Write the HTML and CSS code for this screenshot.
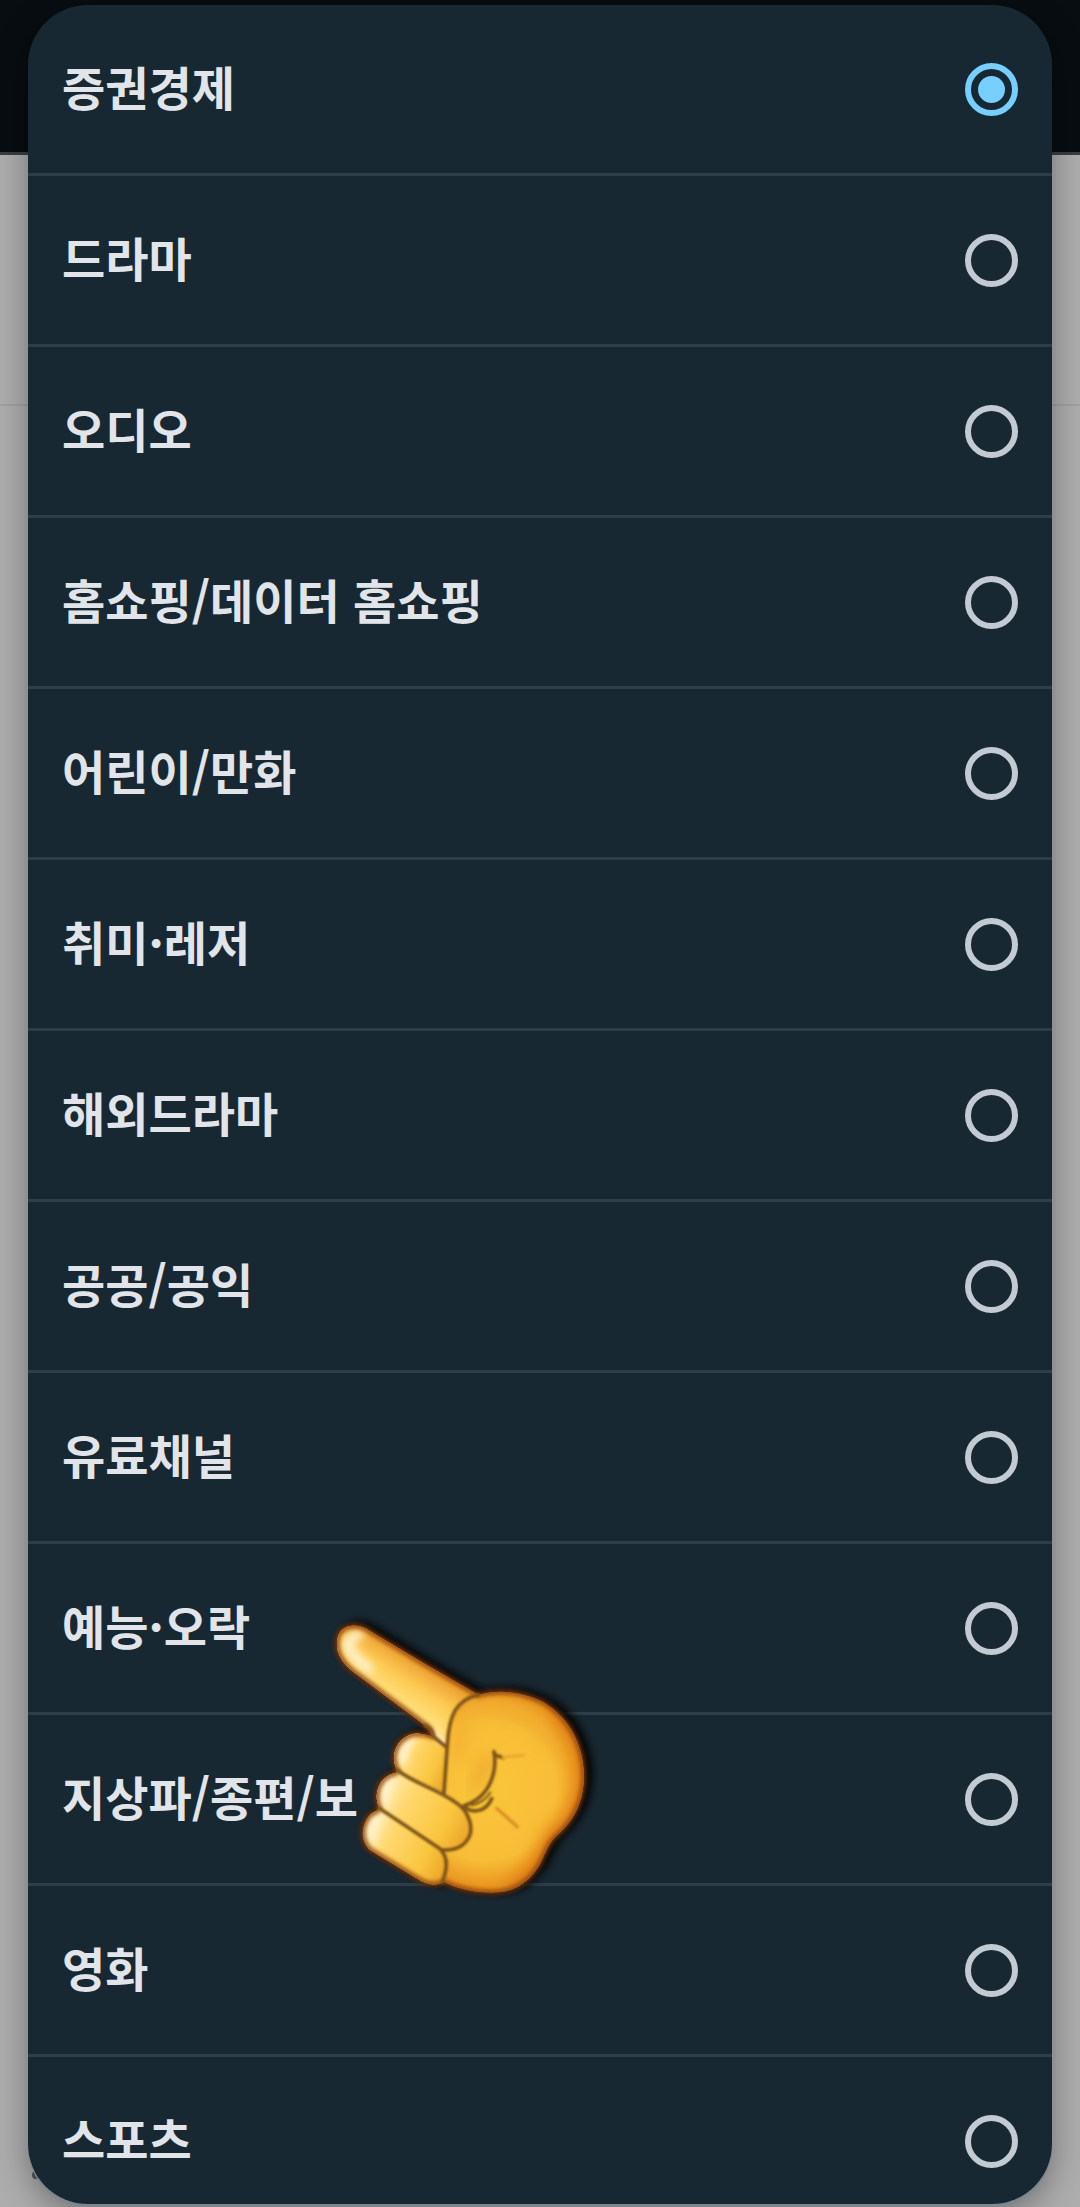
FILE: index.html
```
<!DOCTYPE html>
<html lang="ko">
<head>
<meta charset="utf-8">
<meta name="viewport" content="width=device-width, initial-scale=1">
<title>채널 장르</title>
<link rel="stylesheet" href="styles.css">
</head>
<body>
<div class="page">
  <header class="page-header"></header>
  <section class="page-top"></section>
  <section class="page-body"><span class="bullet"></span></section>
</div>
<form class="dialog">
  <label class="option"><span>증권경제</span><input type="radio" name="genre" checked></label>
  <label class="option"><span>드라마</span><input type="radio" name="genre"></label>
  <label class="option"><span>오디오</span><input type="radio" name="genre"></label>
  <label class="option"><span>홈쇼핑/데이터 홈쇼핑</span><input type="radio" name="genre"></label>
  <label class="option"><span>어린이/만화</span><input type="radio" name="genre"></label>
  <label class="option"><span>취미·레저</span><input type="radio" name="genre"></label>
  <label class="option"><span>해외드라마</span><input type="radio" name="genre"></label>
  <label class="option"><span>공공/공익</span><input type="radio" name="genre"></label>
  <label class="option"><span>유료채널</span><input type="radio" name="genre"></label>
  <label class="option pointed"><span>예능·오락</span><input type="radio" name="genre">
    <svg class="hand" viewBox="0 0 900 960" aria-hidden="true">
      <defs>
        <filter id="shade" x="-20%" y="-20%" width="140%" height="140%"><feGaussianBlur stdDeviation="14"/></filter>
        <filter id="rim" x="-20%" y="-20%" width="140%" height="140%"><feGaussianBlur stdDeviation="7"/></filter>
        <filter id="glow" x="-50%" y="-50%" width="200%" height="200%"><feGaussianBlur stdDeviation="13"/></filter>
        <filter id="soft" x="-50%" y="-50%" width="200%" height="200%"><feGaussianBlur stdDeviation="24"/></filter>
        <filter id="line" x="-20%" y="-20%" width="140%" height="140%"><feGaussianBlur stdDeviation="3"/></filter>
        <path id="outline" d="M84 108 C96 74 142 66 178 92 L350 195 L505 284 C570 266 640 276 700 306 C774 350 820 430 822 525 C822 600 796 654 748 700 C716 726 708 756 690 792 C655 850 610 878 545 878 C490 878 440 866 400 846 C382 858 355 854 335 844 L180 750 C150 720 152 678 178 645 C196 632 205 634 207 624 C190 585 205 540 240 524 C252 518 262 520 262 512 C238 470 258 420 300 404 C322 396 345 402 366 408 C366 392 358 382 340 372 L130 215 C92 185 72 150 84 108 Z"/>
        <clipPath id="inside"><use href="#outline"/></clipPath>
        <linearGradient id="finger" gradientUnits="userSpaceOnUse" x1="245" y1="290" x2="325" y2="165">
          <stop offset="0" stop-color="#ffe07a"/><stop offset=".45" stop-color="#fdc952"/><stop offset="1" stop-color="#e89224"/>
        </linearGradient>
        <radialGradient id="palm" gradientUnits="userSpaceOnUse" cx="530" cy="570" r="340">
          <stop offset="0" stop-color="#f9c63b"/><stop offset=".62" stop-color="#f8bd36"/><stop offset="1" stop-color="#df7d13"/>
        </radialGradient>
        <linearGradient id="knuckle" gradientUnits="objectBoundingBox" x1="0" y1=".25" x2="1" y2=".7">
          <stop offset="0" stop-color="#fff0c0"/><stop offset=".32" stop-color="#ffd76d"/><stop offset=".75" stop-color="#fac63f"/><stop offset="1" stop-color="#eda82c"/>
        </linearGradient>
      </defs>
      <use href="#outline" fill="#000" stroke="#000" stroke-width="16" transform="translate(18 -5)" filter="url(#shade)"/>
      <use href="#outline" fill="#6a3108" stroke="#6a3108" stroke-width="14" filter="url(#rim)"/>
      <g clip-path="url(#inside)">
        <use href="#outline" fill="url(#palm)"/>
        <path d="M70 60 L180 88 L505 284 Q420 310 412 440 L340 385 L60 190Z" fill="url(#finger)"/>
        <path d="M450 480 C430 370 460 330 530 325 C620 320 680 350 720 430" fill="none" stroke="#f3b033" stroke-width="36" filter="url(#soft)"/>
        <path d="M750 330 C885 450 845 640 735 710 C705 780 670 840 600 885" fill="none" stroke="#df7d16" stroke-width="62" filter="url(#soft)"/>
        <path d="M540 465 L492 570" stroke="#eda22c" stroke-width="30" filter="url(#soft)"/>
        <path d="M262 512 C230 465 260 400 320 396 L412 442 L405 580Z" fill="url(#knuckle)"/>
        <path d="M207 624 C180 570 215 515 264 514 L405 580 L450 612 C487 645 495 690 465 730 C440 752 420 752 395 750Z" fill="url(#knuckle)"/>
        <path d="M180 750 C145 720 155 650 207 624 L395 750 C418 778 414 815 395 860 L340 860Z" fill="url(#knuckle)"/>
        <path d="M112 138 Q118 112 145 104 M115 140 Q130 172 175 205 M278 480 Q270 445 300 424 M225 600 Q217 565 240 547 M182 715 Q180 675 204 658" fill="none" stroke="#fff2cc" stroke-width="32" stroke-linecap="round" filter="url(#glow)"/>
        <path d="M370 385 Q378 415 405 430" fill="none" stroke="#ffe5bb" stroke-width="20" filter="url(#rim)"/>
        <use href="#outline" fill="none" stroke="#94480e" stroke-width="16" filter="url(#rim)"/>
      </g>
      <g fill="none" stroke="#7f5516" stroke-width="11" stroke-linecap="round" stroke-linejoin="round" filter="url(#line)">
        <path d="M505 284 C438 300 417 345 412 435 L402 578"/>
        <path d="M345 376 Q370 390 368 408 L407 440"/>
        <path d="M262 510 C310 550 380 565 435 606 C478 632 495 688 472 720 C450 750 422 750 398 750"/>
        <path d="M207 624 L390 746 C418 775 410 810 397 846"/>
        <path d="M552 455 C560 500 550 590 462 617 C482 642 527 638 545 596"/>
        <path d="M555 465 L580 473"/>
        <path d="M485 616 Q520 609 541 578" stroke-width="6"/>
        <path d="M560 625 L622 680" stroke="#dc8f28" stroke-width="10"/>
        <path d="M580 472 L640 466" stroke="#e9aa30" stroke-width="9"/>
      </g>
    </svg>
  </label>
  <label class="option"><span>지상파/종편/보</span><input type="radio" name="genre"></label>
  <label class="option"><span>영화</span><input type="radio" name="genre"></label>
  <label class="option"><span>스포츠</span><input type="radio" name="genre"></label>
</form>
</body>
</html>
```
FILE: styles.css
```
* {
  box-sizing: border-box;
}

body {
  margin: 0;
  height: 100vh;
  overflow: hidden;
  background: #adadad;
  font-family: "Noto Sans CJK KR", "Noto Sans", sans-serif;
}

.page {
  display: flex;
  flex-direction: column;
  height: 100%;
}

.page-header {
  flex: none;
  height: 155px;
  background: #070d10;
  border-bottom: 3px solid #393e41;
}

.page-top {
  flex: none;
  height: 251px;
  border-bottom: 2px solid #a0a0a0;
}

.page-body {
  flex: 1;
  display: flex;
  align-items: flex-end;
  padding: 0 32px 28px;
}

.bullet {
  width: 8px;
  height: 8px;
  border-radius: 50%;
  background: #555;
}

/* The genre picker lies over the dimmed page and scrolls on its own. */
.dialog {
  position: fixed;
  inset: 5px 28px 3px;
  overflow: hidden auto;
  scrollbar-width: none;
  border-radius: 60px;
  background: #182832;
  box-shadow: 0 3px 0 #7c8890, 0 10px 32px rgba(0, 0, 0, 0.35);
}

.option {
  display: flex;
  align-items: center;
  justify-content: space-between;
  height: 171px;
  padding: 0 34px;
  border-bottom: 3px solid #2e3e49;
  color: #e1e5e9;
  font-size: 47px;
  font-weight: 700;
  line-height: 64px;
}

.option span {
  padding-bottom: 6px;
}

.option input {
  appearance: none;
  flex: none;
  display: grid;
  place-items: center;
  width: 53px;
  height: 53px;
  margin: 0;
  border: 6px solid #c2cbd3;
  border-radius: 50%;
}

.option input:checked {
  border-color: #76cffd;
}

.option input:checked::before {
  content: "";
  width: 27px;
  height: 27px;
  border-radius: 50%;
  background: #76cffd;
}

.pointed {
  position: relative;
}

.hand {
  position: absolute;
  z-index: 1;
  top: 56px;
  left: 282px;
  width: 300px;
  height: 320px;
  overflow: visible;
  pointer-events: none;
}
```
